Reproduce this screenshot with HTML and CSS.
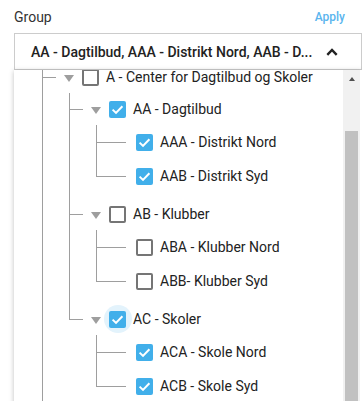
FILE: index.html
```html
<!DOCTYPE html>
<html lang="en">

<head>
    <meta charset="UTF-8">
    <meta name="viewport" content="width=device-width, initial-scale=1.0">
    <title>Group filter</title>
    <link rel="stylesheet" href="styles.css">
</head>

<body>
    <!-- Filter header -->
    <div class="filter-head">
        <span class="filter-title">Group</span>
        <a href="#" class="apply-link">Apply</a>
    </div>

    <!-- Selected value -->
    <div class="select-box">
        <span class="select-value">AA - Dagtilbud, AAA - Distrikt Nord, AAB - D...</span>
        <svg class="chevron" width="12" height="8" viewBox="0 0 12 8">
            <path d="M1.3 6.8 L6 2 L10.7 6.8" fill="none" stroke="#222" stroke-width="2.4"/>
        </svg>
    </div>

    <!-- Dropdown tree -->
    <div class="dropdown">
        <div class="tree-view">
            <ul class="tree root">
                <li class="node branch">
                    <div class="node-row">
                        <span class="toggle"></span>
                        <span class="check"></span>
                        <span class="node-label">A - Center for Dagtilbud og Skoler</span>
                    </div>
                    <ul class="tree">
                        <li class="node branch">
                            <div class="node-row">
                                <span class="toggle"></span>
                                <span class="check checked"></span>
                                <span class="node-label">AA - Dagtilbud</span>
                            </div>
                            <ul class="tree">
                                <li class="node leaf">
                                    <div class="node-row">
                                        <span class="check checked"></span>
                                        <span class="node-label">AAA - Distrikt Nord</span>
                                    </div>
                                </li>
                                <li class="node leaf">
                                    <div class="node-row">
                                        <span class="check checked"></span>
                                        <span class="node-label">AAB - Distrikt Syd</span>
                                    </div>
                                </li>
                            </ul>
                        </li>
                        <li class="node branch">
                            <div class="node-row">
                                <span class="toggle"></span>
                                <span class="check"></span>
                                <span class="node-label">AB - Klubber</span>
                            </div>
                            <ul class="tree">
                                <li class="node leaf">
                                    <div class="node-row">
                                        <span class="check"></span>
                                        <span class="node-label">ABA - Klubber Nord</span>
                                    </div>
                                </li>
                                <li class="node leaf">
                                    <div class="node-row">
                                        <span class="check"></span>
                                        <span class="node-label">ABB- Klubber Syd</span>
                                    </div>
                                </li>
                            </ul>
                        </li>
                        <li class="node branch">
                            <div class="node-row">
                                <span class="toggle"></span>
                                <span class="check checked focused"></span>
                                <span class="node-label">AC - Skoler</span>
                            </div>
                            <ul class="tree">
                                <li class="node leaf">
                                    <div class="node-row">
                                        <span class="check checked"></span>
                                        <span class="node-label">ACA - Skole Nord</span>
                                    </div>
                                </li>
                                <li class="node leaf">
                                    <div class="node-row">
                                        <span class="check checked"></span>
                                        <span class="node-label">ACB - Skole Syd</span>
                                    </div>
                                </li>
                            </ul>
                        </li>
                    </ul>
                </li>
            </ul>
        </div>

        <!-- Scrollbar -->
        <div class="scrollbar">
            <div class="scroll-up"></div>
            <div class="scroll-thumb"></div>
        </div>
    </div>
</body>

</html>
```

FILE: styles.css
```css
body {
    font-family: Roboto, "Liberation Sans", sans-serif;
    margin: 0;
    padding: 0;
    background-color: #fff;
    color: #222;
    overflow: hidden;
}

.filter-head {
    display: flex;
    justify-content: space-between;
    align-items: center;
    padding: 7px 17px 0 14px;
    line-height: 20px;
}

.filter-title {
    font-size: 14px;
    color: #333;
}

.apply-link {
    font-size: 12px;
    font-weight: 500;
    color: #5ab5ee;
    text-decoration: none;
}

.select-box {
    display: flex;
    align-items: center;
    box-sizing: border-box;
    height: 37px;
    margin: 6px 0 0 14px;
    padding: 0 23px 0 16px;
    border: 1px solid #ccc;
}

.select-value {
    font-size: 14px;
    font-weight: 500;
    white-space: nowrap;
}

.chevron {
    margin-left: auto;
}

.dropdown {
    display: flex;
    height: 340px;
    margin-left: 14px;
    background-color: #fff;
    box-shadow: 0 1px 5px rgba(0, 0, 0, 0.25);
    overflow: hidden;
    isolation: isolate;
}

.tree-view {
    flex: 1;
    padding-left: 28px;
}

.tree {
    list-style: none;
    margin: 0;
    padding: 0 0 5px 27px;
}

.tree.root {
    margin-top: -9px;
    padding-left: 0;
}

.node {
    position: relative;
}

/* vertical guide */
.node::before {
    content: '';
    position: absolute;
    left: 0;
    top: 0;
    bottom: 0;
    width: 1px;
    background-color: #9e9e9e;
}

/* horizontal connector */
.node::after {
    content: '';
    position: absolute;
    left: 0;
    height: 1px;
    background-color: #9e9e9e;
}

.branch::after {
    top: 16px;
    width: 14px;
}

.leaf::after {
    top: 17px;
    width: 30px;
}

.tree .tree > .branch:last-child::before {
    bottom: auto;
    height: 16px;
}

.tree .tree > .leaf:last-child::before {
    bottom: auto;
    height: 17px;
}

.node-row {
    display: flex;
    align-items: center;
    height: 32px;
    padding-left: 40px;
}

.branch > .node-row {
    padding-left: 14px;
}

.leaf > .node-row {
    height: 34px;
}

.toggle {
    display: flex;
    justify-content: center;
    width: 26px;
    margin-top: 3px;
}

.toggle::before {
    content: '';
    border-left: 5px solid transparent;
    border-right: 5px solid transparent;
    border-top: 7px solid #9e9e9e;
}

.check {
    position: relative;
    box-sizing: border-box;
    width: 17px;
    height: 17px;
    border: 2px solid #757575;
    border-radius: 2px;
    background-color: #fff;
}

.check.checked {
    border: none;
    background-color: #41afea;
    background-image: url("data:image/svg+xml,%3Csvg xmlns='http://www.w3.org/2000/svg' viewBox='0 0 17 17'%3E%3Cpath d='M3.6 8.6 L7 11.9 L13.4 5.3' fill='none' stroke='white' stroke-width='2'/%3E%3C/svg%3E");
}

.check.focused::before {
    content: '';
    position: absolute;
    left: 50%;
    top: 50%;
    width: 28px;
    height: 28px;
    margin: -14px 0 0 -14px;
    border-radius: 50%;
    background-color: #e3f3fc;
    z-index: -1;
}

.node-label {
    margin-left: 7px;
    font-size: 14px;
    color: #222;
    white-space: nowrap;
}

.scrollbar {
    width: 17px;
    margin-right: 2px;
    background-color: #f1f1f1;
}

.scroll-up {
    display: flex;
    justify-content: center;
    align-items: center;
    height: 17px;
}

.scroll-up::before {
    content: '';
    border-left: 3px solid transparent;
    border-right: 3px solid transparent;
    border-bottom: 4px solid #505050;
}

.scroll-thumb {
    height: 300px;
    margin: 44px 2px 0;
    background-color: #c1c1c1;
}
```
